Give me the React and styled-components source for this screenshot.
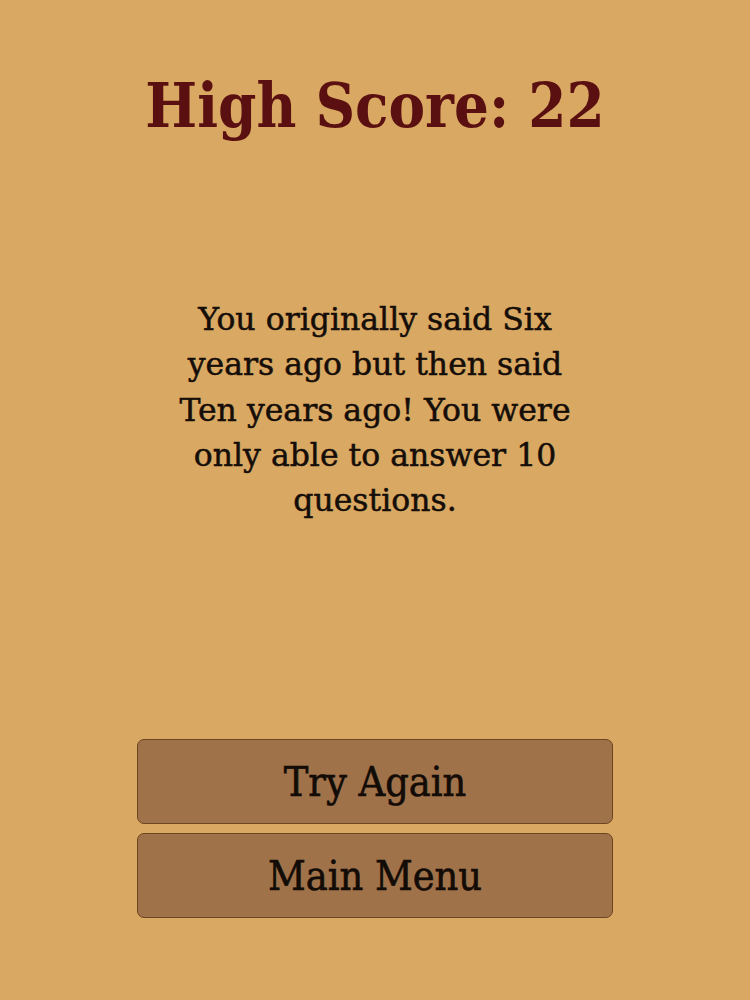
import React from "react";
import styled, { createGlobalStyle } from "styled-components";

const Global = createGlobalStyle`
  html, body { margin: 0; padding: 0; background: #d9a862; }
  #root { min-height: 1000px; }
`;

const Screen = styled.div`
  height: 1000px;
  box-sizing: border-box;
  display: flex;
  flex-direction: column;
  align-items: center;
  padding: 62px 0 82px;
  background: #d9a862;
  font-family: "DejaVu Serif", serif;
`;

const Title = styled.h1`
  margin: 0;
  font-family: "DejaVu Serif Condensed", "DejaVu Serif", serif;
  font-size: 61px;
  line-height: 88px;
  font-weight: bold;
  color: #5a0f10;
`;

const Message = styled.p`
  margin: 147px 0 0;
  width: 420px;
  text-align: center;
  font-size: 31.5px;
  line-height: 45.3px;
  color: #150d08;
  -webkit-text-stroke: 0.5px #150d08;
`;

const Actions = styled.div`
  margin-top: auto;
  width: 476px;
  display: flex;
  flex-direction: column;
  gap: 9px;
`;

const Button = styled.button`
  height: 85px;
  box-sizing: border-box;
  border: 1.5px solid #6e4522;
  border-radius: 7px;
  background: #a0724a;
  color: #120b06;
  font-family: "DejaVu Serif Condensed", "DejaVu Serif", serif;
  font-size: 41px;
  -webkit-text-stroke: 0.6px #120b06;
  cursor: pointer;
`;

export default function App() {
  return (
    <>
      <Global />
      <Screen>
        <Title>High Score: 22</Title>
        <Message>
          You originally said Six years ago but then said Ten years ago! You were
          only able to answer 10 questions.
        </Message>
        <Actions>
          <Button>Try Again</Button>
          <Button>Main Menu</Button>
        </Actions>
      </Screen>
    </>
  );
}
